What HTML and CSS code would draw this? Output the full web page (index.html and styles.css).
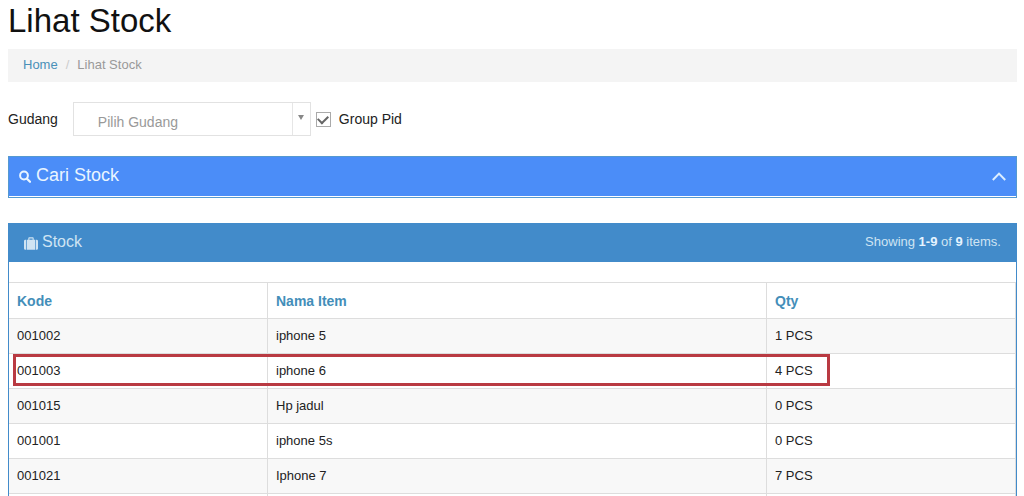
FILE: index.html
```html
<!DOCTYPE html>
<html lang="id">
<head>
<meta charset="utf-8">
<title>Lihat Stock</title>
<link rel="stylesheet" href="styles.css">
</head>
<body>
<main class="page">
  <h1 class="title">Lihat Stock</h1>
  <nav class="breadcrumb" aria-label="Breadcrumb">
    <a class="crumb-link" href="#">Home</a>
    <span class="crumb-sep">/</span>
    <span>Lihat Stock</span>
  </nav>

  <form class="filter">
    <label class="filter-label" for="gudang">Gudang</label>
    <div class="picker">
      <select class="picker-select" id="gudang">
        <option>Pilih Gudang</option>
      </select>
      <span class="picker-arrow">
        <svg width="6" height="5" viewBox="0 0 6 5" aria-hidden="true"><path d="M0 0h6L3 5z" fill="#888"/></svg>
      </span>
    </div>
    <input class="check" type="checkbox" id="group" checked>
    <label for="group">Group Pid</label>
  </form>

  <section class="search-panel">
    <button class="search-head" type="button">
      <svg width="12" height="13" viewBox="0 0 12 13" fill="none" stroke="#e9f5ff" aria-hidden="true"><circle cx="5" cy="5.5" r="3.9" stroke-width="2"/><path d="M8 8.7l3 3" stroke-width="2.3" stroke-linecap="round"/></svg>
      <span class="search-title">Cari Stock</span>
      <svg width="14" height="9" viewBox="0 0 14 9" fill="none" stroke="#dceeff" stroke-width="2" aria-hidden="true"><path d="M.8 8L7 1.600l6.200 6.400"/></svg>
    </button>
  </section>

  <section class="stock-panel">
    <header class="stock-head">
      <svg width="14" height="13" viewBox="0 0 14 13" fill="#cfe4f3" aria-hidden="true"><path d="M2.300 2.800v10h-.9A1.400 1.400 0 0 1 0 11.400V4.200A1.400 1.400 0 0 1 1.400 2.800zM11.700 2.800v10h.9a1.400 1.400 0 0 0 1.400-1.400V4.200A1.400 1.400 0 0 0 12.600 2.800z"/><path fill-rule="evenodd" d="M3 12.800v-10h1.300V1.200Q4.300.3 5.200.3h3.600q.9 0 .9.900v1.600H11v10zM5.400 2.800h3.200V1.500H5.400z"/></svg>
      <h2 class="stock-title">Stock</h2>
      <span class="summary">Showing <b>1-9</b> of <b>9</b> items.</span>
    </header>
    <div class="table-wrap">
      <table class="stock-table">
        <thead>
          <tr><th class="col-code"><a href="#">Kode</a></th><th class="col-name"><a href="#">Nama Item</a></th><th><a href="#">Qty</a></th></tr>
        </thead>
        <tbody>
          <tr><td>001002</td><td>iphone 5</td><td>1 PCS</td></tr>
          <tr><td>001003</td><td>iphone 6</td><td>4 PCS</td></tr>
          <tr><td>001015</td><td>Hp jadul</td><td>0 PCS</td></tr>
          <tr><td>001001</td><td>iphone 5s</td><td>0 PCS</td></tr>
          <tr><td>001021</td><td>Iphone 7</td><td>7 PCS</td></tr>
          <tr><td></td><td></td><td></td></tr>
        </tbody>
      </table>
      <div class="marker"></div>
    </div>
  </section>
</main>
</body>
</html>
```
FILE: styles.css
```css
* { box-sizing: border-box; }
html { overflow: hidden; }
body {
  margin: 0;
  background: #fff;
  color: #222;
  font: 14px/20px "Liberation Sans", Arial, sans-serif;
}
a { text-decoration: none; }
.page { padding: 0 7px 0 8px; }
.title {
  margin: 0;
  padding: 1px 0 8px;
  color: #111;
  font-size: 33px;
  line-height: 40px;
  font-weight: 400;
}
.breadcrumb {
  display: flex;
  gap: 8px;
  padding: 6px 15px 7px;
  background: #f4f4f4;
  color: #999;
  font-size: 13px;
}
.crumb-link { color: #4a90b8; }
.crumb-sep { color: #ccc; }
.filter {
  display: flex;
  align-items: center;
  margin: 20px 0;
}
.filter-label { margin-right: 15px; }
.picker {
  display: flex;
  width: 238px;
  height: 34px;
  border: 1px solid #e2e2e2;
}
.picker-select {
  flex: 1;
  appearance: none;
  margin: 0;
  padding: 6px 24px 0;
  border: 0;
  background: transparent;
  color: #999;
  font: inherit;
}
.picker-arrow {
  display: flex;
  justify-content: center;
  width: 18px;
  padding-top: 12px;
  border-left: 1px solid #e6e6e6;
}
.check {
  appearance: none;
  display: grid;
  place-items: center;
  width: 15px;
  height: 15px;
  margin: 1px 8px 0 5px;
  border: 1px solid #aaa;
}
.check:checked::before {
  content: "";
  width: 8px;
  height: 5px;
  margin-bottom: 2px;
  border: solid #666;
  border-width: 0 0 2px 2px;
  rotate: -45deg;
}
.search-panel {
  margin-bottom: 25px;
  padding-bottom: 1px;
  border: 1px solid #5599d0;
}
.search-head {
  display: flex;
  align-items: center;
  width: 100%;
  height: 39px;
  padding: 0 10px;
  border: 0;
  background: #4b8df8;
  color: #e9f5ff;
  font: inherit;
  text-align: left;
}
.search-title {
  margin: 0 auto 4px 5px;
  font-size: 18px;
}
.stock-panel { border: 1px solid #428bca; }
.stock-head {
  display: flex;
  align-items: center;
  height: 38px;
  padding: 0 15px;
  background: #428bca;
  color: #cfe4f3;
}
.stock-title {
  margin: 0 auto 2px 4px;
  font-size: 16px;
  font-weight: 400;
}
.summary {
  margin-bottom: 2px;
  font-size: 13px;
}
.summary b { color: #e6f4ff; }
.table-wrap {
  position: relative;
  padding-top: 20px;
}
.stock-table {
  width: 100%;
  table-layout: fixed;
  border-spacing: 0;
  font-size: 13px;
}
.stock-table th,
.stock-table td {
  height: 35px;
  padding: 0 8px;
  border-top: 1px solid #ddd;
  border-right: 1px solid #ddd;
  text-align: left;
}
.stock-table th {
  height: 36px;
  font-size: 14px;
}
.stock-table th a { color: #438eb9; }
.stock-table tbody tr:nth-child(odd) { background: #f8f8f8; }
.col-code { width: 259px; }
.col-name { width: 499px; }
.marker {
  position: absolute;
  top: 92px;
  left: 4px;
  width: 817px;
  height: 32px;
  border: 3px solid #b93a42;
}
```
